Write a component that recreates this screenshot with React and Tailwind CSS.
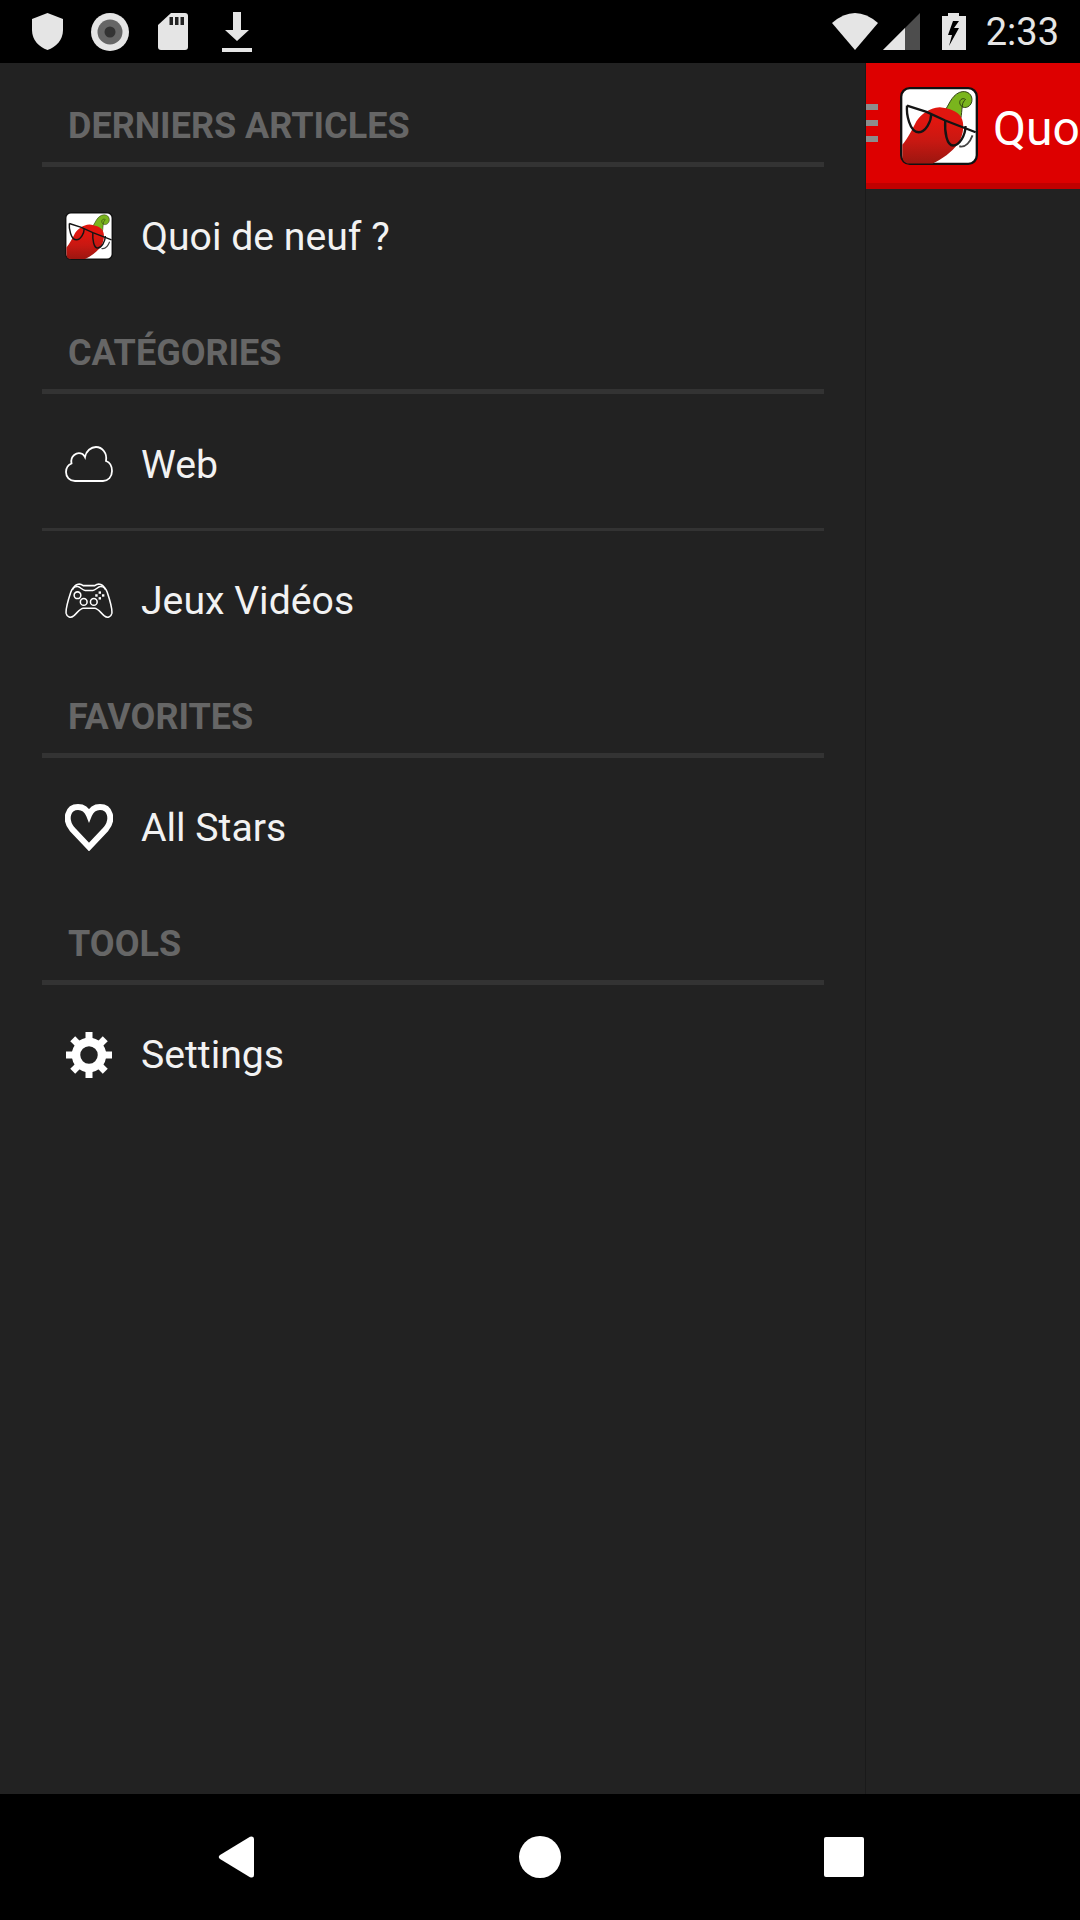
import React from 'react';

// logo du piment, dessiné à la main
const ChiliLogo = ({ className }) => (
  <svg viewBox="0 0 100 100" className={className}>
    <defs>
      <linearGradient id="chili" x1="0" y1="0" x2="0" y2="1">
        <stop offset="0.25" stopColor="#e0160f" />
        <stop offset="0.6" stopColor="#c81812" />
        <stop offset="1" stopColor="#9c1610" />
      </linearGradient>
    </defs>
    <rect x="1.500" y="1.500" width="97" height="97" rx="11" fill="#fff" stroke="#111" strokeWidth="3" />
    <path d="M56 32 C63 24 65 12 76 7 C86 3 94 10 92 19 C90 27 80 29 77 22 C75 17 80 13 84 16 C82 18 80 20 80 24 C79 30 79 36 78 40 Z" fill="#7ab51d" stroke="#2c3a10" strokeWidth="1.200" />
    <path d="M3 74 C10 66 16 54 21 44 C27 35 37 27 51 26 C62 27 74 31 78 38 C83 46 82 60 75 72 C66 84 54 92 42 98 L12 98 C6 98 3 94 3 88 Z" fill="url(#chili)" />
    <g fill="none" stroke="#141414" strokeWidth="3">
      <path d="M9 24 L34 32 L58 43 L97 58" />
      <path d="M9 24 C8 34 12 58 24 58 C33 58 40 44 40 35" />
      <path d="M58 43 C57 58 60 75 68 75 C76 75 84 62 84 50" />
      <path d="M76 76 C84 78 90 70 93 62" stroke="#444" strokeWidth="2.400" />
    </g>
  </svg>
);

const CloudIcon = () => (
  <svg viewBox="0 0 48 36" className="w-[48px] h-[36px]" fill="none" stroke="#fff" strokeWidth="1.800">
    <path d="M10 35 C4.500 35 1 31 1 26 C1 22 3 19 6.500 17.500 C5 10.500 11.500 5 17.500 8 C18.500 8.700 19.500 10 20 11 C21 5 26 1 31 1 C37 1 42.500 7 41 15 C45 16.500 47 20.500 47 25 C47 31 43 35 38 35 Z" />
  </svg>
);

const GamepadIcon = () => (
  <svg viewBox="0 0 50 37" className="w-[50px] h-[37px]" fill="none" stroke="#fff" strokeWidth="1.600">
    <path d="M13 4 C9 4 7 7 6 10 C4 16 0.500 27 1.200 32 C2 36 6 37 9 34.500 C13 31 16 26.500 19 26.500 L31 26.500 C34 26.500 37 31 41 34.500 C44 37 48 36 48.800 32 C49.500 27 46 16 44 10 C43 7 41 4 37 4 C34 4 32 8 29 8 L21 8 C18 8 16 4 13 4 Z" />
    <path d="M8 7 C10 1.500 15 0 19 3 L31 3 C35 0 40 1.500 42 7" />
    <circle cx="13" cy="13" r="3.500" />
    <circle cx="19.500" cy="20" r="3.500" />
    <circle cx="30" cy="20" r="3.500" />
    <g fill="#fff" stroke="none">
      <rect x="35" y="9" width="2.500" height="2.500" />
      <rect x="38.500" y="12" width="2.500" height="2.500" />
      <rect x="35" y="15" width="2.500" height="2.500" />
      <rect x="31.500" y="12" width="2.500" height="2.500" />
    </g>
  </svg>
);

const HeartIcon = () => (
  <svg viewBox="0 0 48 47" className="w-[48px] h-[47px]" fill="none" stroke="#fff" strokeWidth="6">
    <path d="M24 43 L7 25 C-1 15 3 3 13 3 C18 3 22 6 24 11 C26 6 30 3 35 3 C45 3 49 15 41 25 Z" />
  </svg>
);

const GearIcon = () => (
  <svg viewBox="0 0 46 46" className="w-[46px] h-[46px]">
    <circle cx="23" cy="23" r="13" fill="none" stroke="#fff" strokeWidth="8.500" />
    {[0, 45, 90, 135, 180, 225, 270, 315].map((a) => (
      <rect key={a} x="19.500" y="0" width="7" height="9" fill="#fff" transform={`rotate(${a} 23 23)`} />
    ))}
  </svg>
);

const sections = [
  { title: 'DERNIERS ARTICLES', items: [{ label: 'Quoi de neuf ?', icon: <ChiliLogo className="w-[50px] h-[50px] mb-[2px]" /> }] },
  {
    title: 'CATÉGORIES',
    items: [
      { label: 'Web', icon: <CloudIcon /> },
      { label: 'Jeux Vidéos', icon: <GamepadIcon /> },
    ],
  },
  { title: 'FAVORITES', items: [{ label: 'All Stars', icon: <HeartIcon /> }] },
  { title: 'TOOLS', items: [{ label: 'Settings', icon: <GearIcon /> }] },
];

const StatusBar = () => (
  <div className="h-[63px] bg-black flex items-center pl-[32px] pr-[21px] shrink-0">
    {/* shield */}
    <svg viewBox="0 0 31 37" className="w-[31px] h-[37px]">
      <path d="M15.500 0 L31 6 V17 C31 27 24 34 15.500 37 C7 34 0 27 0 17 V6 Z" fill="#e5e5e5" />
    </svg>
    {/* disque */}
    <svg viewBox="0 0 38 38" className="w-[38px] h-[38px] ml-[28px]">
      <circle cx="19" cy="19" r="19" fill="#e5e5e5" />
      <circle cx="19" cy="19" r="12.500" fill="#666" />
      <circle cx="19" cy="19" r="5.500" fill="#333" />
    </svg>
    {/* carte sd */}
    <svg viewBox="0 0 30 37" className="w-[30px] h-[37px] ml-[29px]">
      <path d="M13 0 H27 Q30 0 30 3 V34 Q30 37 27 37 H3 Q0 37 0 34 V12 Z" fill="#e5e5e5" />
      <rect x="11.500" y="4" width="3.500" height="8" fill="#222" />
      <rect x="17" y="4" width="3.500" height="8" fill="#222" />
      <rect x="22.500" y="4" width="3.500" height="8" fill="#222" />
    </svg>
    {/* download */}
    <svg viewBox="0 0 30 40" className="w-[30px] h-[40px] ml-[34px]">
      <path d="M11 0 H19 V18 H27 L15 29 L3 18 H11 Z" fill="#e5e5e5" />
      <rect x="0" y="36" width="30" height="4" fill="#e5e5e5" />
    </svg>
    {/* wifi */}
    <svg viewBox="0 0 46 37" className="w-[46px] h-[37px] ml-auto">
      <path d="M0 10 Q23 -10 46 10 L23 37 Z" fill="#e5e5e5" />
    </svg>
    {/* signal */}
    <svg viewBox="0 0 37 37" className="w-[37px] h-[37px] ml-[5px]">
      <path d="M37 0 V37 H0 Z" fill="#4d4d4d" />
      <path d="M22 15 V37 H0 Z" fill="#e5e5e5" />
    </svg>
    {/* batterie */}
    <svg viewBox="0 0 24 37" className="w-[24px] h-[37px] ml-[22px]">
      <path d="M6 0 H17 V3 H24 V37 H0 V3 H6 Z" fill="#e5e5e5" />
      <path d="M11 8 L6 22 H10 L7 33 L17 15 H12 L17 8 Z" fill="#000" />
    </svg>
    <span className="ml-[20px] text-[38px] leading-none text-[#e5e5e5]">2:33</span>
  </div>
);

const NavBar = () => (
  <div className="h-[126px] bg-black flex items-center pl-[218px] shrink-0">
    <svg viewBox="0 0 36 42" className="w-[36px] h-[42px]">
      <path d="M2 19 L32 0.800 Q36 -0.500 36 3 V39 Q36 42.500 32 41.200 L2 23 Q-0.500 21 2 19 Z" fill="#fff" />
    </svg>
    <div className="w-[42px] h-[42px] rounded-full bg-white ml-[265px]" />
    <div className="w-[40px] h-[40px] rounded-[2px] bg-white ml-[263px]" />
  </div>
);

const App = () => {
  return (
    <div className="w-[1080px] h-[1920px] flex flex-col overflow-hidden bg-black font-['Roboto',sans-serif]">
      <StatusBar />

      <div className="flex flex-1 min-h-0">
        {/* Drawer */}
        <div className="w-[865px] bg-[#222222] pt-[16px] shrink-0 border-r border-[#1a1a1a] box-content">
          {sections.map((section) => (
            <div key={section.title}>
              <div className="h-[88px] ml-[42px] mr-[41px] border-b-[5px] border-[#333333] flex items-end pb-[16px] pl-[26px]">
                <span className="text-[36px] leading-[40px] font-bold text-[#666666]">{section.title}</span>
              </div>
              {section.items.map((item, i) => (
                <div key={item.label}>
                  {i > 0 && <div className="ml-[42px] mr-[41px] h-[3px] bg-[#333333]" />}
                  <div className={`flex items-center pl-[65px] ${section.items.length > 1 && i === 0 ? 'h-[134px] pt-[6px]' : 'h-[139px]'}`}>
                    <div className="w-[48px] flex justify-center">{item.icon}</div>
                    <span className="ml-[28px] mt-[1px] text-[39.2px] leading-[44px] text-[#f2f2f2]">{item.label}</span>
                  </div>
                </div>
              ))}
            </div>
          ))}
        </div>

        {/* Contenu derrière le drawer */}
        <div className="flex-1 min-w-0 bg-[#222222] overflow-hidden">
          <div className="h-[126px] bg-[#dd0000] border-b-[6px] border-[#c00000] flex items-center">
            <div className="flex flex-col gap-[10px] w-[12px] shrink-0">
              <div className="h-[6px] bg-[#8c8c8c]" />
              <div className="h-[6px] bg-[#8c8c8c]" />
              <div className="h-[6px] bg-[#8c8c8c]" />
            </div>
            <ChiliLogo className="w-[78px] h-[78px] ml-[22px] mt-[5px] shrink-0" />
            <span className="ml-[15px] mt-[12px] text-[48px] leading-none text-white whitespace-nowrap">Quoi de neuf ?</span>
          </div>
        </div>
      </div>

      <NavBar />
    </div>
  );
};

export default App;
